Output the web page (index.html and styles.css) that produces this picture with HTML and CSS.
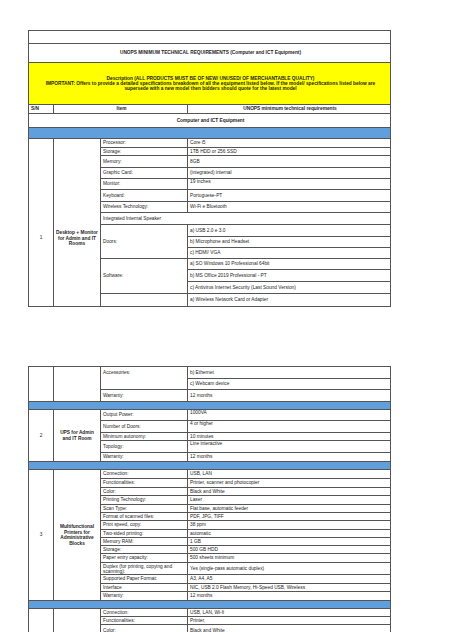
FILE: index.html
```html
<!DOCTYPE html>
<html>
<head>
<meta charset="utf-8">
<link rel="stylesheet" href="styles.css">
</head>
<body>
<div class="sheet">
  <table class="page">
    <colgroup><col class="c-sn"><col class="c-item"><col class="c-label"><col class="c-val"></colgroup>
    <tr class="h13"><td colspan="4"></td></tr>
    <tr class="h19"><td colspan="4" class="title">UNOPS MINIMUM TECHNICAL REQUIREMENTS (Computer and ICT Equipment)</td></tr>
    <tr class="h42"><td colspan="4" class="yellow">Description (ALL PRODUCTS MUST BE OF NEW/ UNUSED/ OF MERCHANTABLE QUALITY)<br>IMPORTANT: Offers to provide a detailed specifications breakdown of all the equipment listed below. If the model/ specifications listed below are<br>supersede with a new model then bidders should quote for the latest model</td></tr>
    <tr class="h9"><td class="hd">S/N</td><td colspan="2" class="hd center">Item</td><td class="hd center">UNOPS minimum technical requirements</td></tr>
    <tr class="h14"><td colspan="4" class="hd center">Computer and ICT Equipment</td></tr>
    <tr class="h11"><td colspan="4" class="blue"></td></tr>
    <tr class="h9"><td rowspan="15" class="sn sn1">1</td><td rowspan="15" class="item item1">Desktop + Monitor for Admin and IT Rooms</td><td>Processor:</td><td>Core i5</td></tr>
    <tr class="h8"><td>Storage:</td><td>1TB HDD or 256 SSD</td></tr>
    <tr class="h12"><td>Memory:</td><td>8GB</td></tr>
    <tr class="h11"><td>Graphic Card:</td><td>(integrated) internal</td></tr>
    <tr class="h11"><td>Monitor:</td><td class="top">19 inches</td></tr>
    <tr class="h12"><td>Keyboard:</td><td>Portuguese-PT</td></tr>
    <tr class="h11"><td>Wireless Technology:</td><td>Wi-Fi e Bluetooth</td></tr>
    <tr class="h12"><td colspan="2">Integrated Internal Speaker</td></tr>
    <tr class="h12"><td rowspan="3">Doors:</td><td>a) USB 2.0 e 3.0</td></tr>
    <tr class="h11"><td>b) Microphone and Headset</td></tr>
    <tr class="h11"><td>c) HDMI/ VGA</td></tr>
    <tr class="h11"><td rowspan="3">Software:</td><td>a) SO Windows 10 Professional 64bit</td></tr>
    <tr class="h12"><td>b) MS Office 2019 Professional - PT</td></tr>
    <tr class="h12"><td>c) Antivirus Internet Security (Last Sound Version)</td></tr>
    <tr class="h13"><td></td><td>a) Wireless Network Card or Adapter</td></tr>
  </table>

  <table class="page page2">
    <colgroup><col class="c-sn"><col class="c-item"><col class="c-label"><col class="c-val"></colgroup>
    <tr class="h12"><td rowspan="3" class="sn"></td><td rowspan="3" class="item"></td><td rowspan="2" class="acc">Accessories:</td><td>b) Ethernet</td></tr>
    <tr class="h11"><td>c) Webcam device</td></tr>
    <tr class="h12"><td>Warranty:</td><td>12 months</td></tr>
    <tr class="h8"><td colspan="4" class="blue"></td></tr>
    <tr class="h11"><td rowspan="5" class="sn">2</td><td rowspan="5" class="item item-ups">UPS for Admin and IT Room</td><td>Output Power:</td><td class="top">1000VA</td></tr>
    <tr class="h12"><td>Number of Doors:</td><td class="top">4 or higher</td></tr>
    <tr class="h8"><td>Minimum autonomy:</td><td>10 minutes</td></tr>
    <tr class="h12"><td>Topology:</td><td class="top">Line interactive</td></tr>
    <tr class="h9"><td>Warranty:</td><td>12 months</td></tr>
    <tr class="h8"><td colspan="4" class="blue"></td></tr>
    <tr class="h9"><td rowspan="15" class="sn">3</td><td rowspan="15" class="item">Multifunctional Printers for Administrative Blocks</td><td>Connection:</td><td>USB, LAN</td></tr>
    <tr class="h9"><td>Functionalities:</td><td>Printer, scanner and photocopier</td></tr>
    <tr class="h8"><td>Color:</td><td>Black and White</td></tr>
    <tr class="h9"><td>Printing Technology:</td><td>Laser</td></tr>
    <tr class="h8"><td>Scan Type:</td><td>Flat base, automatic feeder</td></tr>
    <tr class="h8"><td>Format of scanned files:</td><td>PDF, JPG, TIFF</td></tr>
    <tr class="h9"><td>Print speed, copy:</td><td>38 ppm</td></tr>
    <tr class="h8"><td>Two-sided printing:</td><td>automatic</td></tr>
    <tr class="h8"><td>Memory RAM:</td><td>1 GB</td></tr>
    <tr class="h8"><td>Storage:</td><td>500 GB HDD</td></tr>
    <tr class="h9"><td>Paper entry capacity:</td><td>500 sheets minimum</td></tr>
    <tr class="h12"><td class="wrap">Duplex (for printing, copying and scanning):</td><td>Yes (single-pass automatic duplex)</td></tr>
    <tr class="h9"><td>Supported Paper Format:</td><td>A3, A4, A5</td></tr>
    <tr class="h8"><td>Interface</td><td>NIC, USB 2.0 Flash Memory, Hi-Speed USB, Wireless</td></tr>
    <tr class="h9"><td>Warranty:</td><td>12 months</td></tr>
    <tr class="h8"><td colspan="4" class="blue"></td></tr>
    <tr class="h8"><td rowspan="3" class="sn"></td><td rowspan="3" class="item"></td><td>Connection:</td><td>USB, LAN, Wi-fi</td></tr>
    <tr class="h8"><td>Functionalities:</td><td>Printer,</td></tr>
    <tr class="h12"><td>Color:</td><td>Black and White</td></tr>
  </table>
</div>
</body>
</html>
```

FILE: styles.css
```css
html, body {
  margin: 0;
  padding: 0;
  background: #ffffff;
}
.sheet {
  padding: 30px 0 0 28px;
  font-family: "Liberation Sans", Arial, sans-serif;
  font-size: 4.8px;
  line-height: 1.15;
  color: #1e1e1e;
}
.page {
  border-collapse: collapse;
  table-layout: fixed;
  width: 362px;
  border: 1px solid #3c3c3c;
}
.page2 {
  margin-top: 59px;
}
.c-sn { width: 25px; }
.c-item { width: 47px; }
.c-label { width: 87px; }
.c-val { width: 203px; }
td {
  border: 1px solid #555;
  padding: 0 0 0 2px;
  vertical-align: middle;
  white-space: nowrap;
  overflow: hidden;
}
.h8 { height: 8px; }
.h9 { height: 9px; }
.h11 { height: 11px; }
.h12 { height: 12px; }
.h13 { height: 13px; }
.h14 { height: 14px; }
.h19 { height: 19px; }
.h42 { height: 42px; }
.title {
  text-align: center;
  font-weight: bold;
}
.yellow {
  background: #ffff00;
  text-align: center;
  font-weight: bold;
  line-height: 5px;
}
.hd { font-weight: bold; }
.center { text-align: center; }
.blue { background: #619fdc; }
.top { vertical-align: top; }
.wrap { white-space: normal; line-height: 5px; }
.sn, .item {
  text-align: center;
  white-space: normal;
  padding: 0;
}
.item {
  font-weight: bold;
  line-height: 5.5px;
}
.item-ups { padding: 0 5px; }
.sn1, .item1 { vertical-align: top; }
.sn1 { padding-top: 96px; }
.item1 { padding-top: 91px; }
.acc {
  vertical-align: top;
  padding-top: 3px;
}
```
